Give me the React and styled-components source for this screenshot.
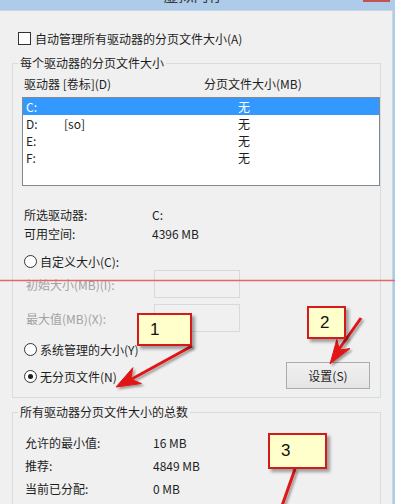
import React from "react";
import styled, { createGlobalStyle } from "styled-components";

const GlobalStyle = createGlobalStyle`
  html, body {
    margin: 0;
    padding: 0;
    overflow: hidden;
  }
  body {
    font-family: "Noto Sans CJK SC", "Noto Sans", sans-serif;
    font-size: 12px;
    color: #1e1e1e;
  }
`;

const drives = [
  { letter: "C:", label: "", size: "无" },
  { letter: "D:", label: "[so]", size: "无" },
  { letter: "E:", label: "", size: "无" },
  { letter: "F:", label: "", size: "无" },
];

const Frame = styled.div`
  position: relative;
  width: 395px;
  height: 504px;
  background: #aecbea;
  overflow: hidden;
  display: flex;
  flex-direction: column;
`;

const TitleBar = styled.div`
  height: 10px;
  flex: none;
  display: grid;
  grid-template-columns: 1fr auto 1fr;
  overflow: hidden;
`;

const Title = styled.div`
  grid-column: 2;
  margin-top: -15px;
  font-size: 15px;
  line-height: 20px;
  color: #3a3a3a;
  margin-right: 8px;
`;

const CloseBtn = styled.div`
  grid-column: 3;
  justify-self: end;
  width: 27px;
  height: 2px;
  margin-right: 5px;
  background: #c75050;
`;

const Body = styled.div`
  flex: 1;
  margin-right: 2px;
  background: #f0f0f0;
  border-top: 1px solid #c9d6e4;
  border-right: 1px solid #c9d6e4;
  display: flex;
  flex-direction: column;
`;

const CheckRow = styled.label`
  display: flex;
  align-items: center;
  gap: 4px;
  height: 14px;
  margin: 21px 0 0 18px;
  line-height: 14px;
`;

const CheckBox = styled.span`
  width: 11px;
  height: 11px;
  border: 1px solid #333;
  background: #fff;
  margin-top: -1px;
`;

const Group = styled.fieldset`
  margin: ${(p) => p.$top}px 0 0 12px;
  width: 369px;
  box-sizing: border-box;
  padding: 0 10px ${(p) => p.$bottom}px 10px;
  border: 1px solid #d5dde4;
  min-inline-size: 0;
`;

const Legend = styled.legend`
  padding: 0 2px;
  margin-left: -5px;
  line-height: 14px;
  color: #1e1e1e;
`;

const HeaderRow = styled.div`
  display: grid;
  grid-template-columns: 180px auto;
  margin-top: 6px;
  padding-left: 1px;
  line-height: 16px;
`;

const ListBox = styled.div`
  margin: 5px -10px 0 -1px;
  height: 87px;
  border: 1px solid #828790;
  background: #fff;
`;

const ListRow = styled.div`
  display: grid;
  grid-template-columns: 38px 174px auto;
  height: 17px;
  line-height: 17px;
  padding-left: 3px;
  background: ${(p) => (p.$selected ? "#3399ff" : "transparent")};
  color: ${(p) => (p.$selected ? "#fff" : "#1e1e1e")};
`;

const InfoGrid = styled.div`
  display: grid;
  grid-template-columns: 128px auto;
  grid-auto-rows: ${(p) => p.$row}px;
  align-items: center;
  margin-top: ${(p) => p.$top}px;
  padding-left: ${(p) => p.$indent}px;
`;

const RadioRow = styled.label`
  display: flex;
  align-items: center;
  gap: 3px;
  height: 16px;
  margin-top: ${(p) => p.$top || 0}px;
  padding-left: 1px;
`;

const Radio = styled.span`
  box-sizing: border-box;
  width: 13px;
  height: 13px;
  border-radius: 50%;
  border: 1px solid #333;
  background: #fff;
  display: flex;
  align-items: center;
  justify-content: center;
  &::after {
    content: "";
    width: 5px;
    height: 5px;
    border-radius: 50%;
    background: ${(p) => (p.$checked ? "#1e1e1e" : "transparent")};
  }
`;

const SizeFields = styled.div`
  display: grid;
  grid-template-columns: 128px 86px;
  grid-auto-rows: 28px;
  row-gap: 6px;
  align-items: center;
  margin-top: 1px;
  padding-left: 3px;
`;

const DisabledLabel = styled.span`
  color: #a2a2a2;
`;

const DisabledInput = styled.div`
  height: 28px;
  box-sizing: border-box;
  border: 1px solid #d9d9d9;
  background: #f0f0f0;
`;

const BottomRow = styled.div`
  display: flex;
  align-items: flex-end;
  margin-top: 9px;
`;

const RadioColumn = styled.div`
  display: flex;
  flex-direction: column;
  padding-bottom: 5px;
`;

const Button = styled.button`
  margin-left: auto;
  width: 84px;
  height: 27px;
  font: inherit;
  color: #1e1e1e;
  border: 1px solid #acacac;
  background: linear-gradient(#f0f0f0, #e5e5e5);
  padding: 0;
`;

const Callout = styled.div`
  position: absolute;
  left: ${(p) => p.$x}px;
  top: ${(p) => p.$y}px;
  width: ${(p) => p.$w}px;
  height: ${(p) => p.$h}px;
  box-sizing: border-box;
  border: 2px solid #d41a1a;
  background: #ffffcc;
  box-shadow: 3px 3px 3px rgba(0, 0, 0, 0.35);
  font-family: "Liberation Sans", Arial, sans-serif;
  font-size: 17px;
  color: #111;
  display: flex;
  align-items: center;
  padding-left: ${(p) => p.$pad}px;
`;

const Overlay = styled.svg`
  position: absolute;
  left: 0;
  top: 0;
  pointer-events: none;
`;

function arrowHead(tip, from, len, half) {
  const dx = from[0] - tip[0];
  const dy = from[1] - tip[1];
  const d = Math.hypot(dx, dy);
  const ux = dx / d;
  const uy = dy / d;
  const bx = tip[0] + ux * len;
  const by = tip[1] + uy * len;
  const nx = tip[0] + ux * len * 0.7;
  const ny = tip[1] + uy * len * 0.7;
  const p1 = [bx - uy * half, by + ux * half];
  const p2 = [bx + uy * half, by - ux * half];
  return `${tip[0]},${tip[1]} ${p1[0]},${p1[1]} ${nx},${ny} ${p2[0]},${p2[1]}`;
}

const Annotations = () => (
  <>
    <Overlay width="395" height="504" viewBox="0 0 395 504">
      <defs>
        <filter id="sh" x="-20%" y="-20%" width="140%" height="140%">
          <feDropShadow dx="2" dy="2" stdDeviation="1.2" floodColor="#000" floodOpacity="0.35" />
        </filter>
      </defs>
      <line x1="0" y1="280.5" x2="395" y2="280.5" stroke="#e06a6a" strokeWidth="1.5" />
      <g filter="url(#sh)" fill="#e01515" stroke="#e01515">
        <line x1="192" y1="346" x2="130" y2="380" strokeWidth="3" />
        <polygon points={arrowHead([116, 387], [192, 346], 24, 9)} strokeWidth="1" />
        <line x1="361" y1="318" x2="337" y2="352" strokeWidth="3" />
        <polygon points={arrowHead([330, 364], [361, 318], 24, 8)} strokeWidth="1" />
        <line x1="295" y1="469" x2="277" y2="520" strokeWidth="3" />
      </g>
    </Overlay>
    <Callout $x={137} $y={313} $w={55} $h={33} $pad={11}>1</Callout>
    <Callout $x={307} $y={306} $w={39} $h={33} $pad={11}>2</Callout>
    <Callout $x={268} $y={433} $w={59} $h={36} $pad={11}>3</Callout>
  </>
);

export default function App() {
  return (
    <>
      <GlobalStyle />
      <Frame>
        <TitleBar>
          <Title>虚拟内存</Title>
          <CloseBtn />
        </TitleBar>
        <Body>
          <CheckRow>
            <CheckBox />
            自动管理所有驱动器的分页文件大小(A)
          </CheckRow>

          <Group $top={10} $bottom={8}>
            <Legend>每个驱动器的分页文件大小</Legend>
            <HeaderRow>
              <span>驱动器 [卷标](D)</span>
              <span>分页文件大小(MB)</span>
            </HeaderRow>
            <ListBox>
              {drives.map((d, i) => (
                <ListRow key={d.letter} $selected={i === 0}>
                  <span>{d.letter}</span>
                  <span>{d.label}</span>
                  <span>{d.size}</span>
                </ListRow>
              ))}
            </ListBox>

            <InfoGrid $row={19} $top={19} $indent={1}>
              <span>所选驱动器:</span>
              <span>C:</span>
              <span>可用空间:</span>
              <span>4396 MB</span>
            </InfoGrid>

            <RadioRow $top={10}>
              <Radio />
              自定义大小(C):
            </RadioRow>
            <SizeFields>
              <DisabledLabel>初始大小(MB)(I):</DisabledLabel>
              <DisabledInput />
              <DisabledLabel>最大值(MB)(X):</DisabledLabel>
              <DisabledInput />
            </SizeFields>

            <BottomRow>
              <RadioColumn>
                <RadioRow>
                  <Radio />
                  系统管理的大小(Y)
                </RadioRow>
                <RadioRow $top={11}>
                  <Radio $checked />
                  无分页文件(N)
                </RadioRow>
              </RadioColumn>
              <Button>设置(S)</Button>
            </BottomRow>
          </Group>

          <Group $top={7} $bottom={40}>
            <Legend>所有驱动器分页文件大小的总数</Legend>
            <InfoGrid $row={23} $top={12} $indent={2}>
              <span>允许的最小值:</span>
              <span>16 MB</span>
              <span>推荐:</span>
              <span>4849 MB</span>
              <span>当前已分配:</span>
              <span>0 MB</span>
            </InfoGrid>
          </Group>
        </Body>
        <Annotations />
      </Frame>
    </>
  );
}
